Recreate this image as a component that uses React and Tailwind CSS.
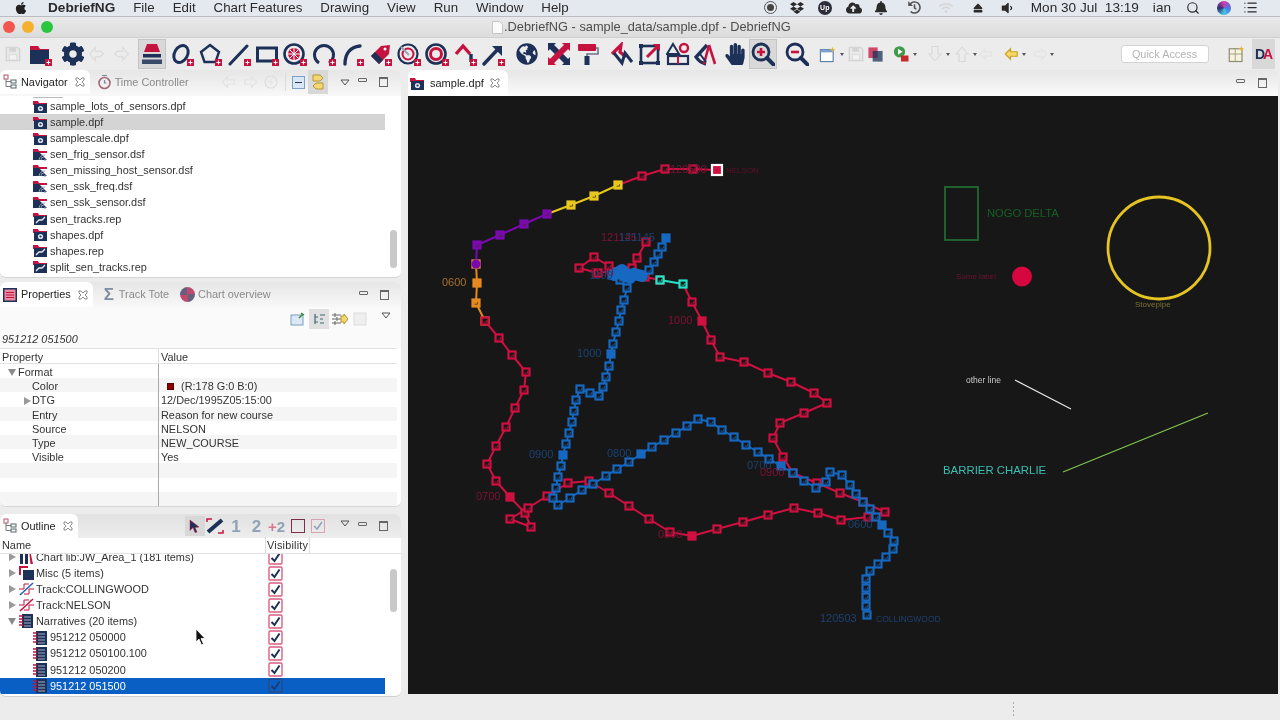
import React from "react";
import { FaCog, FaDropbox, FaCloudUploadAlt, FaBell, FaHistory, FaWifi, FaEject, FaVolumeDown, FaHandPaper, FaApple, FaGlobeAmericas } from "react-icons/fa";
import { Search, List } from "lucide-react";

const N = "#1d3158";
const R = "#c6123f";

const Plus = () => (
  <g>
    <rect x="17" y="17" width="7" height="7" fill={R} />
    <path d="M20.5 18.5v4M18.5 20.5h4" stroke="#fff" strokeWidth="1" />
  </g>
);
const I = ({ children, s = 24, vb = "0 0 24 24" }) => (
  <svg width={s} height={s} viewBox={vb} fill="none">{children}</svg>
);

const tools = {
  save: <I s={18}><path d="M3 3h15l3 3v15H3z" fill="#e9e9e9" stroke="#cfcfcf" strokeWidth="1.5" /><rect x="7" y="4" width="9" height="5" fill="#d4d4d4" /><rect x="7" y="13" width="10" height="7" fill="#f3f3f3" stroke="#d4d4d4" /></I>,
  folder: <I><path d="M2 22V4h8l2 3h9v3H2" fill={R} /><path d="M2 8h19v14H2z" fill={N} /><Plus /></I>,
  layers: <I><path d="M7 2h10l3 8H4z" fill={R} /><path d="M3 12h18v3.5H3z" fill={N} /><path d="M2 17.5h20V22H2z" fill={N} opacity=".85" /></I>,
  ellipse: <I><ellipse cx="11" cy="12" rx="6.5" ry="9" transform="rotate(30 11 12)" stroke={N} strokeWidth="3" /><Plus /></I>,
  pent: <I><path d="M12 3l9 7-3.5 10h-11L3 10z" stroke={N} strokeWidth="2.4" /><Plus /></I>,
  line: <I><path d="M3 22L20 4" stroke={N} strokeWidth="3" strokeLinecap="round" /><Plus /></I>,
  rect: <I><rect x="2.5" y="6" width="19" height="13" stroke={N} strokeWidth="3" /><Plus /></I>,
  snow: <I><circle cx="11" cy="12" r="9.5" stroke={N} strokeWidth="2.6" /><circle cx="11" cy="12" r="6" fill={R} /><path d="M5 12h12M11 6v12M7 8l8 8M15 8l-8 8" stroke="#fff" strokeWidth="1" /><Plus /></I>,
  arc: <I><path d="M7 21a9.5 9.5 0 1 1 10 0" stroke={N} strokeWidth="3" /><Plus /></I>,
  arc2: <I><path d="M5 22c0-10 5-17 15-18" stroke={N} strokeWidth="3.4" strokeLinecap="round" /><Plus /></I>,
  tag: <I><path d="M3 14L13 4l9-1-1 9-10 10z" fill={R} /><path d="M3 14l8 8 4-4-8-8z" fill={N} /><circle cx="17" cy="7" r="1.5" fill="#fff" /><Plus /></I>,
  tgt1: <I><circle cx="11" cy="12" r="9.5" stroke={N} strokeWidth="2.2" /><circle cx="11" cy="12" r="5.5" stroke={R} strokeWidth="2" /><path d="M4 5l8 8" stroke="#9aa3b0" strokeWidth="2" /><Plus /></I>,
  tgt2: <I><circle cx="11" cy="12" r="9.5" stroke={N} strokeWidth="2.6" /><circle cx="11" cy="12" r="5.5" stroke={R} strokeWidth="3" /><Plus /></I>,
  angle: <I><path d="M3 12l7-8 7 8" stroke={R} strokeWidth="3.4" /><path d="M18 12v8" stroke={N} strokeWidth="3.4" /><Plus /></I>,
  arrow: <I><path d="M3 22L18 6" stroke={N} strokeWidth="3.4" strokeLinecap="round" /><path d="M11 4h10v10z" fill={N} /><Plus /></I>,
  x: <I><path d="M4 4l16 16" stroke={N} strokeWidth="6" /><path d="M20 4L4 20" stroke={R} strokeWidth="6" /><path d="M1 1h8L1 9zM23 23h-8l8-8z" fill={N} /><path d="M23 1v8l-8-8zM1 23v-8l8 8z" fill={R} /></I>,
  roller: <I><rect x="3" y="2" width="18" height="7" rx="1" fill={R} /><path d="M21 6h2v6H12v3" stroke="#6b7688" strokeWidth="1.6" /><rect x="9.5" y="14" width="5" height="9" fill={N} /></I>,
  check: <I><path d="M2 12l9-9-1 7 6 5" stroke={R} strokeWidth="3.2" /><path d="M4 11l8 10 3-10 7 9" stroke={N} strokeWidth="3" /></I>,
  rarrow: <I><rect x="3" y="4" width="17" height="17" stroke={N} strokeWidth="2.6" /><path d="M9 15L21 3" stroke={R} strokeWidth="3" /><path d="M15 2h7v7z" fill={R} /><rect x="1" y="2" width="4" height="4" fill={N} /><rect x="1" y="19" width="4" height="4" fill={N} /><rect x="18" y="19" width="4" height="4" fill={N} /></I>,
  atc: <I><path d="M7 2l6 10H1z" stroke={N} strokeWidth="2" /><circle cx="18" cy="6" r="4" stroke={R} strokeWidth="2.4" /><rect x="2" y="14" width="20" height="8" stroke={N} strokeWidth="2.2" /><path d="M12 14v8" stroke={R} strokeWidth="2" /></I>,
  comp: <I><path d="M13 3L2 15c3 5 6 6 10 7" stroke={N} strokeWidth="3.4" /><path d="M15 3l6 19M15 3l-5 19" stroke={R} strokeWidth="2.6" /><path d="M6 12l6 8" stroke={N} strokeWidth="2" /></I>,
  zin: <I><circle cx="10" cy="10" r="8" stroke={N} strokeWidth="2.8" /><path d="M16 16l7 7" stroke={N} strokeWidth="4" strokeLinecap="round" /><path d="M6 10h8M10 6v8" stroke={R} strokeWidth="2.6" /></I>,
  zout: <I><circle cx="10" cy="10" r="8" stroke={N} strokeWidth="2.8" /><path d="M16 16l7 7" stroke={N} strokeWidth="4" strokeLinecap="round" /><path d="M6 10h8" stroke={R} strokeWidth="2.6" /></I>,
  undo: <I s={22}><path d="M9 5L3 12l6 7v-4h5l4-3-3-3H9z" stroke="#dedede" strokeWidth="1.5" /></I>,
  redo: <I s={22}><path d="M15 5l6 7-6 7v-4h-5l-4-3 3-3h6z" stroke="#dedede" strokeWidth="1.5" /></I>,
};

const Slot = ({ children, className = "w-[28.3px]" }) => (
  <div className={"h-[30px] flex items-center justify-center shrink-0 " + className}>{children}</div>
);
const Caret = ({ className = "w-[7px]" }) => (
  <div className={"flex items-center justify-center shrink-0 " + className}>
    <div className="border-x-[2.5px] border-x-transparent border-t-[3px] border-t-[#555]" />
  </div>
);
const Arrow = ({ dir, c = "#e3e3e3", f = "none" }) => (
  <I s={18}><path d={dir === "l" ? "M10 5L3 12l7 7v-4h9V9h-9z" : "M14 5l7 7-7 7v-4H5V9h9z"} stroke={c} fill={f} strokeWidth="1.6" /></I>
);
const Close = () => (
  <svg width="10" height="10" viewBox="0 0 10 10" fill="none" className="shrink-0"><path d="M1 1h2l2 2 2-2h2v2L7 5l2 2v2H7L5 7 3 9H1V7l2-2-2-2z" stroke="#6f6f6f" strokeWidth=".8" /></svg>
);
const MinMax = ({ className = "" }) => (
  <div className={"flex items-center gap-[12px] " + className}>
    <div className="w-[9px] h-[4px] border border-[#666] rounded-[1px] mb-[4px]" />
    <div className="w-[9px] h-[10px] border border-[#666] border-t-2" />
  </div>
);
const ViewMenu = ({ className = "" }) => (
  <svg width="10" height="7" viewBox="0 0 10 7" fill="none" className={className}><path d="M1 1h8L5 6z" stroke="#555" strokeWidth="1" /></svg>
);
const Tree3 = () => (
  <svg width="14" height="16" viewBox="0 0 14 16" fill="none" className="shrink-0"><rect x="1" y="1" width="4" height="4" stroke="#b5546c" /><rect x="8" y="6" width="5" height="3" stroke="#566" /><rect x="8" y="11" width="5" height="3" stroke="#566" /><path d="M3 5v7.5h5M3 7.5h5" stroke="#777" /></svg>
);

const ScrollBar = ({ className }) => (
  <div className="w-[16px] shrink-0 flex justify-center relative"><div className={"w-[7px] rounded-[4px] bg-[#c8c8c8] absolute " + className} /></div>
);

const FileIcon = ({ type }) => (
  <svg width="15" height="13" viewBox="0 0 15 13" className="shrink-0">
    <path d="M0 12V1h5l1 2h8v2H0z" fill={R} />
    <path d={type === "dsf" ? "M0 12V4h6l8 8z" : "M1 4h13v9H1z"} fill={N} />
    {type === "dpf" && <circle cx="7.5" cy="8.5" r="2.6" fill="#dfe5ee" />}
    {type === "dpf" && <circle cx="7.5" cy="8.5" r="1.1" fill={N} />}
    {type === "dsf" && <path d="M8 12a3 3 0 0 1 3-3M6 12a6 6 0 0 1 6-5M11 12h2" stroke="#8e98a8" fill="none" />}
    {type === "rep" && <path d="M3 11l3-3h3l3-3" stroke="#e6ecf5" strokeWidth="1.3" fill="none" />}
  </svg>
);

const files = [
  ["sample_lots_of_sensors.dpf", "dpf"], ["sample.dpf", "dpf", true], ["samplescale.dpf", "dpf"], ["sen_frig_sensor.dsf", "dsf"],
  ["sen_missing_host_sensor.dsf", "dsf"], ["sen_ssk_freq.dsf", "dsf"], ["sen_ssk_sensor.dsf", "dsf"], ["sen_tracks.rep", "rep"],
  ["shapes.dpf", "dpf"], ["shapes.rep", "rep"], ["split_sen_tracks.rep", "rep"],
];

const Tri = ({ open, className = "" }) => open
  ? <div className={"border-x-[4px] border-x-transparent border-t-[7px] border-t-[#8a8a8a] " + className} />
  : <div className={"border-y-[4px] border-y-transparent border-l-[7px] border-l-[#9a9a9a] " + className} />;

const Check = ({ dim }) => (
  <svg width="15" height="15" viewBox="0 0 15 15" fill="none" className="shrink-0">
    <rect x="1" y="1" width="13" height="13" rx="1" stroke={dim ? "#274b88" : "#d9607f"} strokeWidth="1.4" fill={dim ? "none" : "#fff"} />
    <path d="M3.5 8l3 3 5-7.5" stroke={dim ? "#1a3c74" : N} strokeWidth="2" />
  </svg>
);
const Book = ({ w = 15 }) => (
  <svg width={w} height="14" viewBox="0 0 15 14" className="shrink-0"><rect x="3" y="0" width="11" height="14" fill={N} /><path d="M5 3h7M5 6h7M5 9h7M5 12h7" stroke="#dfe5ee" strokeWidth=".7" /><path d="M0 2h4M0 5h4M0 8h4M0 11h4" stroke={R} strokeWidth="1.4" /></svg>
);
const TrackI = ({ c }) => (
  <svg width="15" height="14" viewBox="0 0 15 14" fill="none" className="shrink-0"><path d="M1 13L14 1" stroke={c} strokeWidth="1.6" /><path d="M0 7h5V2h5M5 12h5V7h5" stroke={R} strokeWidth="1" /></svg>
);
const outlineRows = [
  { t: "Chart lib:JW_Area_1 (181 items)", ic: <svg width="15" height="14" viewBox="0 0 15 14" className="shrink-0"><path d="M1 0h3v14H1zM6 0h3v14H6z" fill={N} /><path d="M11 0l3 14h-2.500L10 0z" fill={R} /></svg> },
  { t: "Misc (5 items)", ic: <svg width="15" height="14" viewBox="0 0 15 14" className="shrink-0"><path d="M0 0h9v2H2v7H0z" fill={R} /><rect x="4" y="4" width="11" height="10" fill={N} /></svg> },
  { t: "Track:COLLINGWOOD", ic: <TrackI c="#2063b5" /> },
  { t: "Track:NELSON", ic: <TrackI c={R} /> },
  { t: "Narratives (20 items)", ic: <Book />, open: true },
  { t: "951212 050000", sub: true },
  { t: "951212 050100.100", sub: true },
  { t: "951212 050200", sub: true },
  { t: "951212 051500", sub: true, sel: true },
];

const red1 = [[717,170],[693,169],[665,169],[642,176],[618,185]];
const yel = [[618,185],[594,196],[571,205],[547,214]];
const pur = [[547,214],[524,224],[500,235],[477,245],[476,264]];
const org = [[476,264],[477,283,1],[476,303],[485,321]];
const red2 = [[485,321],[499,338],[512,355],[526,372],[524,390],[515,408],[506,427],[496,446],[487,464],[496,481],[510,497,1],[525,513],[531,527],[510,519],[528,508],[547,496],[568,483],[589,481],[609,493],[629,506],[649,519],[670,532],[692,536,1],[717,529],[743,522],[768,515],[794,508],[818,513],[841,520],[868,517],[885,512],[863,502],[840,493],[817,483],[793,473],[783,457],[773,438],[780,423],[804,413],[827,403],[814,393],[791,382],[768,373],[744,362],[720,357],[711,340],[702,321,1],[692,302],[683,284]];
const cy = [[683,284],[660,280]];
const red3 = [[660,280],[645,277],[632,270],[616,272],[609,266],[594,257],[579,268],[598,273],[632,268],[637,258],[646,242]];
const blue = [[867,615],[866,606],[866,597],[866,588],[866,579],[870,571],[878,564],[886,557],[893,549],[894,541],[888,533],[882,525,1],[876,517],[870,509],[863,502],[856,494],[850,485],[842,475],[830,472],[826,482],[816,488],[804,481],[793,473],[781,466,1],[769,459],[758,452],[746,445],[734,437],[722,430],[711,422],[698,419],[687,426],[676,433],[664,440],[652,447],[641,454,1],[629,462],[617,469],[606,476],[593,484],[582,490],[570,498],[558,505],[553,498],[556,488],[558,477],[561,466],[563,455,1],[566,444],[569,433],[572,422],[574,411],[576,400],[580,389],[590,393],[599,396],[603,387],[606,377],[609,366],[611,354,1],[613,344],[616,332],[619,321],[621,310],[624,300],[627,288],[620,280],[612,275,1],[618,272,1],[624,276,1],[632,274,1],[640,276,1],[649,270],[654,262],[658,254],[662,247],[666,238,1]];

const Track = ({ pts, c, skipLast, solid }) => (
  <g>
    <polyline points={pts.map((p) => p[0] + "," + p[1]).join(" ")} fill="none" stroke={c} strokeWidth="2" strokeLinejoin="round" />
    {pts.slice(0, skipLast ? -1 : undefined).map((p, i) => (
      <g key={i}>
        <rect x={p[0] - 3.5} y={p[1] - 3.5} width="7" height="7" fill={p[2] || solid ? c : "#171717"} stroke={c} strokeWidth="2.2" />
        {!p[2] && <path d={`M${p[0] - 1.5} ${p[1] + 1.2}h3v-2`} stroke={solid ? "#3a2c10" : c} strokeWidth=".7" fill="none" />}
      </g>
    ))}
  </g>
);

const labels = [
  ["120500", 670, 173, 11, "#7f1233"], ["NELSON", 726, 173, 8, "#5e1129"], ["121145", 601, 241, 11, "#7f1233"], ["121145", 619, 241, 11, "#1c4272"],
  ["1100", 590, 276, 11, "#7f1233"], ["1100", 589, 279, 11, "#1c4272"], ["0600", 442, 286, 11, "#a5722f"], ["1000", 668, 324, 11, "#7f1233"],
  ["1000", 577, 357, 11, "#1c4272"], ["0900", 529, 458, 11, "#1c4272"], ["0800", 607, 457, 11, "#1c4272"], ["0700", 476, 500, 11, "#7f1233"],
  ["0800", 658, 538, 11, "#7f1233"], ["0700", 747, 469, 11, "#1c4272"], ["0900", 760, 476, 11, "#7f1233"], ["0600", 848, 528, 11, "#1c4272"],
  ["120503", 820, 622, 11, "#1c4272"], ["COLLINGWOOD", 876, 622, 8.5, "#1c3f70"], ["NOGO DELTA", 987, 217, 11.2, "#166025"], ["Stovepipe", 1135, 307, 8, "#7c7330"],
  ["Some label", 956, 279, 8, "#6d1233"], ["other line", 966, 383, 8.5, "#c9c9c9"], ["BARRIER CHARLIE", 943, 474, 11.4, "#3cbfb3"],
];

const Tab = ({ icon, label, active, close }) => active ? (
  <div className="h-full flex items-center gap-[3px] bg-white rounded-t-[6px] pl-[3px] pr-[5px] text-[#222]">{icon}<span className="ml-[1px]">{label}</span>{close && <span className="ml-[4px]"><Close /></span>}</div>
) : (
  <div className="h-full flex items-center gap-[3px] text-[#8a8a8a]">{icon}<span>{label}</span></div>
);

export default function App() {
  return (
    <div className="w-[1280px] h-[720px] overflow-hidden bg-[#ececec] relative font-['Liberation_Sans',sans-serif] blur-[0.3px] text-[10.9px] text-[#333]">
      {/* macOS menu bar */}
      <div className="h-[17px] bg-[#e4e9f0] flex items-center text-[13.3px] leading-[15px] text-[#2a2a2a] border-b border-[#b9bcc0] overflow-hidden">
        <div className="w-[48px] flex justify-center pr-[6px]"><FaApple size={14} color="#222" /></div>
        <div className="flex gap-[18px] -mt-[1px]">
          <span className="font-bold text-[13.6px]">DebriefNG</span><span>File</span><span>Edit</span><span>Chart Features</span><span>Drawing</span><span>View</span><span>Run</span><span>Window</span><span>Help</span>
        </div>
        <div className="ml-auto flex items-center text-[#2a2a2a] -mt-[1px]">
          <div className="w-[13px] h-[13px] rounded-full border border-[#555] flex items-center justify-center mr-[13px]"><div className="w-[7px] h-[7px] rounded-full bg-[#444]" /></div>
          <FaDropbox size={14} className="mr-[14px]" />
          <div className="w-[14px] h-[14px] rounded-full bg-[#2d2d3a] text-white text-[7px] font-bold flex items-center justify-center mr-[14px]">Up</div>
          <FaCloudUploadAlt size={16} className="mr-[12px]" />
          <FaBell size={14} className="mr-[20px]" />
          <FaHistory size={13} color="#555" className="mr-[18px]" />
          <FaWifi size={14} color="#d6d6d6" className="mr-[20px]" />
          <FaEject size={10} className="mr-[17px]" />
          <FaVolumeDown size={14} className="mr-[17px]" />
          <span className="text-[13.6px] whitespace-nowrap mr-[14px]">Mon 30 Jul&nbsp; 13:19</span>
          <span className="text-[13.6px] mr-[15px]">ian</span>
          <Search size={14} className="mr-[17px]" />
          <div className="w-[14px] h-[14px] rounded-full bg-[conic-gradient(#d23ea8,#4a74e6,#46c6e0,#2d2d6e,#d23ea8)] mr-[12px]" />
          <List size={15} className="mr-[22px]" />
        </div>
      </div>

      {/* title bar */}
      <div className="h-[21px] bg-[linear-gradient(#e9e9e9,#dcdcdc)] flex items-center relative border-b border-[#cfcfcf]">
        <div className="flex items-center gap-[7px] pl-[3px]">
          <div className="w-[12px] h-[12px] rounded-full bg-[#f2564e]" />
          <div className="w-[12px] h-[12px] rounded-full bg-[#f5b12e]" />
          <div className="w-[12px] h-[12px] rounded-full bg-[#28c73f]" />
        </div>
        <div className="absolute left-[492px] flex items-center gap-[1px] text-[12.8px] text-[#4d4d4d]">
          <svg width="11" height="13" viewBox="0 0 11 13"><path d="M.5.5h7l3 3v9H.5z" fill="#fafafa" stroke="#c4c4c4" /></svg>
          <span className="whitespace-nowrap">.DebriefNG - sample_data/sample.dpf - DebriefNG</span>
        </div>
      </div>

      {/* toolbar */}
      <div className="h-[32px] flex items-center bg-[#ececec]">
        <Slot className="w-[26px]">{tools.save}</Slot>
        <Slot className="w-[28px]">{tools.folder}</Slot>
        <Slot className="w-[28px] ml-[5px]"><FaCog size={24} color={N} /></Slot>
        <Slot className="w-[22px]">{tools.undo}</Slot>
        <Slot className="w-[22px]">{tools.redo}</Slot>
        <Slot className="w-[28px] ml-[7px] bg-[#d8d8d8] border border-[#c4c4c4]">{tools.layers}</Slot>
        <Slot className="w-[28.3px] ml-[2px]">{tools.ellipse}</Slot>
        <Slot>{tools.pent}</Slot><Slot>{tools.line}</Slot><Slot>{tools.rect}</Slot><Slot>{tools.snow}</Slot>
        <Slot>{tools.arc}</Slot><Slot>{tools.arc2}</Slot><Slot>{tools.tag}</Slot><Slot>{tools.tgt1}</Slot>
        <Slot>{tools.tgt2}</Slot><Slot>{tools.angle}</Slot><Slot>{tools.arrow}</Slot>
        <Slot className="w-[28px] ml-[5px]"><FaGlobeAmericas size={22} color={N} /></Slot>
        <Slot className="w-[28px] ml-[4px]">{tools.x}</Slot>
        <Slot className="w-[28px]">{tools.roller}</Slot>
        <Slot className="w-[28px] ml-[7px]">{tools.check}</Slot>
        <Slot className="w-[28px]">{tools.rarrow}</Slot>
        <Slot className="w-[28.5px]">{tools.atc}</Slot>
        <Slot className="w-[28.5px]">{tools.comp}</Slot>
        <Slot className="w-[28px]"><FaHandPaper size={22} color={N} /></Slot>
        <Slot className="w-[28px] bg-[#d8d8d8] border border-[#c4c4c4]">{tools.zin}</Slot>
        <Slot className="w-[28px] ml-[6px]">{tools.zout}</Slot>
        <Slot className="w-[20px] ml-[7px]"><I s={17}><rect x="2" y="5" width="18" height="17" fill="#fff" stroke="#5a7fa8" strokeWidth="1.6" /><rect x="2" y="5" width="18" height="4" fill="#7ea3c9" /><path d="M19 1l1 3 3 1-3 1-1 3-1-3-3-1 3-1z" fill="#e5b628" /></I></Slot>
        <Caret className="w-[8px]" />
        <Slot className="w-[20px]">{tools.save}</Slot>
        <Slot className="w-[20px]"><I s={17}><rect x="2" y="2" width="13" height="15" fill={R} opacity=".75" /><rect x="8" y="7" width="14" height="15" fill={N} opacity=".75" /></I></Slot>
        <Slot className="w-[20px] ml-[5px]"><I s={18}><circle cx="10" cy="9" r="7.5" fill="#3e9b4a" /><path d="M8 5l6 4-6 4z" fill="#fff" /><rect x="12" y="14" width="10" height="8" fill="#c62a2a" /></I></Slot>
        <Caret className="w-[8px]" />
        <Slot className="w-[20px] ml-[6px]"><I s={18}><path d="M8 2h8v10h4l-8 9-8-9h4z" stroke="#d9d9d9" strokeWidth="1.5" /></I></Slot>
        <Caret className="w-[6px]" />
        <Slot className="w-[20px] ml-[1px]"><I s={18}><path d="M8 22V12H4l8-9 8 9h-4v10z" stroke="#d9d9d9" strokeWidth="1.5" /></I></Slot>
        <Caret className="w-[6px]" />
        <Slot className="w-[17px]"><Arrow dir="l" /></Slot>
        <Slot className="w-[18px] ml-[8px]"><Arrow dir="l" c="#c9a32a" f="#f5d866" /></Slot>
        <Caret className="w-[6px]" />
        <Slot className="w-[18px] ml-[4px]"><Arrow dir="r" /></Slot>
        <Caret className="w-[6px]" />
        <div className="ml-[66px] w-[88px] h-[18px] bg-white border border-[#d4d4d4] rounded-[3px] text-[#b4b4b4] flex items-center justify-center shrink-0">Quick Access</div>
        <Slot className="w-[19px] ml-[18px]"><I s={18}><rect x="3" y="5" width="17" height="17" fill="#f7f2de" stroke="#8c8c74" strokeWidth="1.6" /><path d="M3 12h17M11 5v17" stroke="#8c8c74" /><path d="M19 1l1 3 3 1-3 1-1 3-1-3-3-1 3-1z" fill="#e5b628" /></I></Slot>
        <Slot className="w-[23px] ml-[6px] bg-[#d8d8d8] text-[14px] font-bold leading-none tracking-[-2px]"><span className="text-[#1d3158]">D</span><span className="text-[#c6123f]">A</span></Slot>
      </div>

      {/* workspace */}
      <div className="flex gap-[7px] h-[627px]">
        <div className="w-[401px] shrink-0 flex flex-col">
          {/* Navigator */}
          <div className="h-[208px] flex flex-col bg-white rounded-[6px] border-b border-[#d5d5d5] overflow-hidden">
            <div className="h-[26px] bg-[linear-gradient(#e6e6e6,#f8f8f8)] flex items-center shrink-0 pb-[2px]">
              <Tab active icon={<Tree3 />} label="Navigator" close />
              <div className="ml-[7px] h-full"><Tab icon={<svg width="15" height="16" viewBox="0 0 15 16" fill="none"><circle cx="7.500" cy="9" r="5.500" stroke="#a2687a" strokeWidth="1.600" /><path d="M5 1.500h5M7.500 6v3h2" stroke="#7d8696" strokeWidth="1.200" /></svg>} label="Time Controller" /></div>
              <div className="ml-[31px] flex items-center gap-[3px]">
                <Arrow dir="l" /><Arrow dir="r" />
                <I s={18}><circle cx="12" cy="12" r="8" stroke="#dedede" strokeWidth="1.600" /><path d="M8 12h8M12 8v8" stroke="#e4e4e4" strokeWidth="1.400" /></I>
              </div>
              <div className="ml-[5px] w-px h-[18px] bg-[#dcdcdc]" />
              <div className="ml-[6px] w-[13px] h-[13px] border border-[#7da0c8] bg-[#d9e6f5] flex items-center justify-center shrink-0"><div className="w-[7px] h-px bg-[#335]" /></div>
              <div className="ml-[3px] w-[20px] h-[24px] bg-[#d8d8d8] flex items-center justify-center shrink-0"><svg width="14" height="16" viewBox="0 0 14 16" fill="none"><path d="M2 1h7l3 3-3 3H2zM12 9H5L2 12l3 3h7z" fill="#f4d873" stroke="#b6952f" /></svg></div>
              <ViewMenu className="ml-[12px]" />
              <MinMax className="ml-[8px]" />
            </div>
            <div className="flex-1 flex overflow-hidden">
              <div className="w-[385px] pt-[1px] overflow-hidden">
                <div className="h-[1px] ml-[33px] w-[30px] bg-[#bbb]" />
                {files.map(([n, t, sel]) => (
                  <div key={n} className={"h-[16.1px] flex items-center pl-[33px] gap-[2px] whitespace-nowrap " + (sel ? "bg-[#d4d4d4]" : "")}><FileIcon type={t} /><span>{n}</span></div>
                ))}
              </div>
              <ScrollBar className="top-[134px] h-[38px]" />
            </div>
          </div>

          {/* Properties */}
          <div className="mt-[4px] h-[225px] flex flex-col bg-white rounded-[6px] border-b border-[#d5d5d5] overflow-hidden">
            <div className="h-[25px] bg-[linear-gradient(#e6e6e6,#f8f8f8)] flex items-center shrink-0 pr-[12px]">
              <Tab active label="Properties" close icon={<svg width="14" height="14" viewBox="0 0 14 14"><rect width="14" height="14" fill="#1d3158" /><rect x="1.500" y="1.500" width="11" height="11" fill="#e98aa3" /><path d="M3 4.500h8M3 7h8M3 9.500h8" stroke="#c6123f" /></svg>} />
              <div className="ml-[11px] h-full"><Tab icon={<span className="text-[17px] text-[#7d8ba3] font-bold leading-none mr-[2px]">Σ</span>} label="Track Tote" /></div>
              <div className="ml-[11px] h-full"><Tab icon={<div className="w-[15px] h-[15px] rounded-full bg-[conic-gradient(#c04a6e_0_25%,#66607f_25%_50%,#c04a6e_50%_75%,#66607f_75%)]" />} label="Chart overview" /></div>
              <MinMax className="ml-auto" />
            </div>
            <div className="h-[23px] flex items-center justify-end pr-[10px] shrink-0 bg-[#fafafa]">
              <svg width="15" height="14" viewBox="0 0 15 14"><rect x="1" y="3" width="12" height="10" fill="#dbe8f5" stroke="#7f9bb8" /><path d="M9 6l4-4M11 1l3 2" stroke="#2f8b3f" strokeWidth="1.500" /></svg>
              <div className="ml-[4px] w-[20px] h-[20px] bg-[#e0e0e0] flex items-center justify-center"><svg width="12" height="12" viewBox="0 0 12 12" fill="none"><path d="M2 1v10M2 4h3M2 9h3M7 2h5M7 6h3M7 10h4" stroke="#3c6a75" strokeWidth="1.200" /></svg></div>
              <svg width="17" height="14" viewBox="0 0 17 14" className="ml-[2px]" fill="none"><path d="M1 3h9M1 7h9M1 11h9M4 1v4M6 5v4M4 9v4" stroke="#666" /><path d="M10 4h3V2l4 5-4 5v-2h-3z" fill="#f2d66e" stroke="#b6952f" /></svg>
              <svg width="14" height="14" viewBox="0 0 14 14" className="ml-[5px]" fill="none"><rect x="1" y="1" width="12" height="12" fill="#eee" stroke="#ddd" /></svg>
              <ViewMenu className="ml-[14px] mb-[6px]" />
            </div>
            <div className="h-[18px] italic flex items-center pl-[2px] text-[#333] shrink-0 bg-[#fafafa]">951212 051500</div>
            <div className="flex pr-[4px] flex-col flex-1 min-h-0">
              <div className="h-[16px] grid grid-cols-[158px_1fr] border-y border-[#e2e2e2] bg-white shrink-0 items-center">
                <span className="pl-[2px]">Property</span>
                <span className="pl-[2px] border-l border-[#ddd]">Value</span>
              </div>
              <div className="flex-1 overflow-hidden">
                {[
                  ["Format", "", "f"], ["Color", "(R:178 G:0 B:0)", "c"], ["DTG", "12/Dec/1995Z05:15:00", "d"], ["Entry", "Reason for new course"],
                  ["Source", "NELSON"], ["Type", "NEW_COURSE"], ["Visible", "Yes"], ["", ""], ["", ""], ["", ""],
                ].map(([k, v, f], i) => (
                  <div key={i} className={"h-[14.2px] grid grid-cols-[158px_1fr] items-stretch " + (i % 2 ? "bg-[#f5f5f5]" : "bg-white")}>
                    <div className={"flex items-center " + (f === "f" ? "pl-[8px]" : f === "d" ? "pl-[24px]" : "pl-[32px]")}>
                      {f === "f" && <Tri open className="mr-[2px]" />}
                      {f === "d" && <Tri className="mr-[1px]" />}
                      <span>{k}</span>
                    </div>
                    <div className={"flex items-center border-l border-[#aaa] " + (f === "c" ? "pl-[8px]" : "pl-[2px]")}>
                      {f === "c" && <div className="w-[7px] h-[7px] bg-[#8e0000] border border-[#5c0000] mr-[7px]" />}
                      <span>{v}</span>
                    </div>
                  </div>
                ))}
              </div>
            </div>
          </div>

          {/* Outline */}
          <div className="mt-[7px] h-[183px] flex flex-col bg-white rounded-[6px] border-b border-[#cfcfcf] overflow-hidden">
            <div className="h-[24px] bg-[linear-gradient(#e2e2e2,#ededed)] flex items-center shrink-0 pr-[13px]">
              <Tab active icon={<Tree3 />} label="Outline" close />
              <div className="ml-auto flex items-center">
                <div className="w-[20px] h-[20px] bg-[#d8d8d8] flex items-center justify-center"><svg width="12" height="14" viewBox="0 0 12 14"><path d="M1 1l9 7-4 .5L8 13l-2 .5-2-5-3 3z" fill={N} stroke={R} strokeWidth=".5" /></svg></div>
                <svg width="18" height="16" viewBox="0 0 18 16" fill="none" className="ml-[1px]"><path d="M2 14L16 2" stroke={N} strokeWidth="4" /><path d="M1 4V1h5M17 12v3h-5" stroke={R} strokeWidth="1.500" /></svg>
                <span className="ml-[4px] w-[16px] text-center text-[17px] font-bold text-[#8fa2b8] leading-none">1</span>
                <span className="ml-[4px] w-[17px] text-center text-[17px] font-bold text-[#8fa2b8] leading-none">2</span>
                <span className="ml-[2px] w-[19px] text-center text-[15px] font-bold text-[#8fa2b8] leading-none whitespace-nowrap"><span className="text-[#d77892]">+</span>2</span>
                <div className="ml-[5px] w-[14px] h-[14px] border-[1.5px] border-[#7a3146]" />
                <div className="ml-[6px] w-[14px] h-[14px] border-[1.5px] border-[#d9a0b0] flex items-center justify-center"><svg width="10" height="10" viewBox="0 0 10 10" fill="none"><path d="M1 5l3 3 5-7" stroke="#8fa2b8" strokeWidth="1.500" /></svg></div>
                <ViewMenu className="ml-[15px] mb-[6px]" />
                <MinMax className="ml-[8px]" />
              </div>
            </div>
            <div className="h-[16px] flex items-center border-b border-[#e2e2e2] shrink-0 bg-white">
              <span className="w-[265px] pl-[2px]">Name</span>
              <span className="border-x border-[#ddd] px-[1px] tracking-[0.2px]">Visibility</span>
            </div>
            <div className="flex-1 flex overflow-hidden">
              <div className="w-[385px] -mt-[5px] overflow-hidden h-[147px]">
                {outlineRows.map((r, i) => (
                  <div key={i} className={"h-[16.1px] flex items-center relative whitespace-nowrap " + (r.sel ? "bg-[#0a5fc4] text-white" : "")}>
                    {r.sub ? (
                      <div className="pl-[33px] flex items-center gap-[2px]"><Book /><span>{r.t}</span></div>
                    ) : (
                      <div className="pl-[8px] flex items-center gap-[2px]">
                        <Tri open={r.open} className={r.open ? "mr-[1px]" : "mr-[1px] ml-[1px]"} />
                        {r.ic}<span>{r.t}</span>
                      </div>
                    )}
                    <div className="absolute left-[268px]"><Check dim={r.sel} /></div>
                  </div>
                ))}
              </div>
              <ScrollBar className="top-[15px] h-[43px]" />
            </div>
          </div>
        </div>

        {/* Editor */}
        <div className="flex-1 flex flex-col pr-[2px]">
          <div className="h-[26px] bg-[linear-gradient(#e6e6e6,#fbfbfb)] rounded-t-[6px] flex items-center shrink-0">
            <div className="h-full flex items-center pl-[2px] pr-[8px] bg-white rounded-t-[6px] text-[#222] gap-[5px]">
              <FileIcon type="dpf" /><span className="text-[11px]">sample.dpf</span><span className="ml-[1px]"><Close /></span>
            </div>
            <MinMax className="ml-auto mr-[11px] gap-[13px]" />
          </div>
          <div className="h-[598px] bg-[#171717]">
            <svg width="870" height="598" viewBox="408 96 870 598" className="block font-['Liberation_Sans',sans-serif]">
              <Track pts={red1} c="#cf1040" skipLast />
              <Track pts={yel} c="#e8c81e" skipLast solid />
              <Track pts={pur} c="#7a0ab0" solid />
              <Track pts={org} c="#e58a1e" solid />
              <Track pts={red2} c="#cf1040" skipLast />
              <Track pts={red3} c="#cf1040" />
              <Track pts={cy} c="#25e3c8" />
              <Track pts={blue} c="#1668c0" />
              <path d="M614 275l5-3 7 4 8-2 8 2M622 270l8 8" stroke="#1668c0" strokeWidth="12" fill="none" strokeLinecap="round" />
              <rect x="712" y="165" width="10" height="10" fill="#cf1040" stroke="#fff" strokeWidth="2.200" />
              <circle cx="476" cy="264" r="4.500" fill="#7a0ab0" />
              <rect x="945" y="187" width="33" height="53" fill="none" stroke="#1f6b2f" strokeWidth="1.800" />
              <circle cx="1159" cy="248" r="51" fill="none" stroke="#e6c522" strokeWidth="2.800" />
              <circle cx="1022" cy="276.500" r="10" fill="#d6063e" />
              <line x1="1015" y1="380" x2="1071" y2="409" stroke="#e8e8e8" strokeWidth="1.200" />
              <line x1="1063" y1="472" x2="1208" y2="413" stroke="#82c654" strokeWidth="1.200" />
              {labels.map(([t, x, y, s, c], i) => (
                <text key={i} x={x} y={y} fontSize={s} fill={c}>{t}</text>
              ))}
            </svg>
          </div>
        </div>
      </div>

      {/* status bar */}
      <div className="h-[23px] flex items-center justify-center pl-[746px]">
        <div className="flex flex-col gap-[2px]">
          <div className="w-[1px] h-[2px] bg-[#aaa]" /><div className="w-[1px] h-[2px] bg-[#aaa]" /><div className="w-[1px] h-[2px] bg-[#aaa]" /><div className="w-[1px] h-[2px] bg-[#aaa]" />
        </div>
      </div>

      {/* mouse cursor */}
      <svg width="12" height="18" viewBox="0 0 12 18" className="absolute left-[195px] top-[628px]"><path d="M1 1v13l3-3 2.500 6 2-1-2.500-5.500H10z" fill="#111" stroke="#fff" strokeWidth=".8" /></svg>
    </div>
  );
}
